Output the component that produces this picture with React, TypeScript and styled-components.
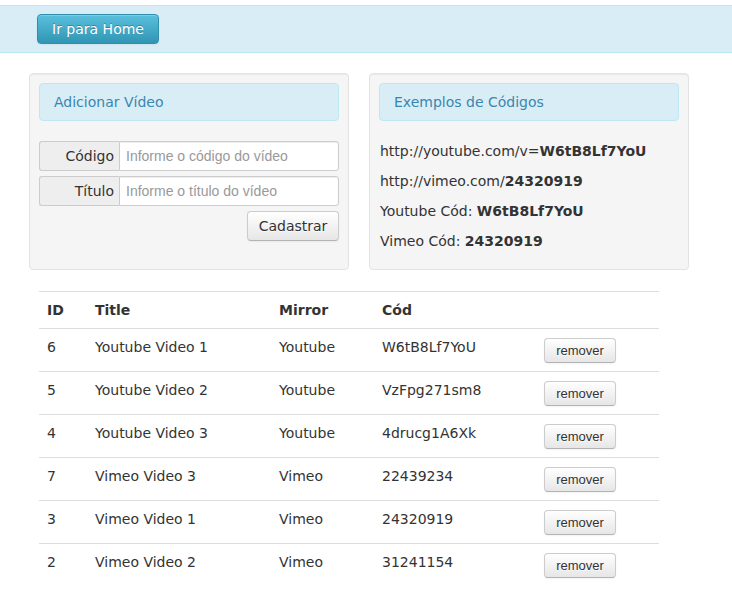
import React from 'react';
import styled, { createGlobalStyle } from 'styled-components';

// --- Types ---
type Video = {
  id: number;
  title: string;
  mirror: string;
  code: string;
};

const VIDEOS: Video[] = [
  { id: 6, title: 'Youtube Video 1', mirror: 'Youtube', code: 'W6tB8Lf7YoU' },
  { id: 5, title: 'Youtube Video 2', mirror: 'Youtube', code: 'VzFpg271sm8' },
  { id: 4, title: 'Youtube Video 3', mirror: 'Youtube', code: '4drucg1A6Xk' },
  { id: 7, title: 'Vimeo Video 3', mirror: 'Vimeo', code: '22439234' },
  { id: 3, title: 'Vimeo Video 1', mirror: 'Vimeo', code: '24320919' },
  { id: 2, title: 'Vimeo Video 2', mirror: 'Vimeo', code: '31241154' },
];

const COL_WIDTHS = [48, 184, 103, 162, 123];

// --- Global ---
const GlobalStyle = createGlobalStyle`
  html, body {
    margin: 0;
    padding: 0;
    background: #fff;
  }
  body {
    font-family: "DejaVu Sans", Verdana, sans-serif;
    font-size: 14px;
    line-height: 20px;
    color: #333;
  }
  * { box-sizing: border-box; }
`;

// --- Styled Components ---
const Page = styled.div`
  width: 732px;
  padding-top: 5px;
`;

const TopBar = styled.div`
  height: 48px;
  background: #d9edf7;
  border-top: 1px solid #bce8f1;
  border-bottom: 1px solid #bce8f1;
  display: flex;
  align-items: center;
  padding-left: 37px;
`;

const HomeButton = styled.button`
  height: 30px;
  width: 122px;
  padding: 0;
  font-family: inherit;
  font-size: 14px;
  color: #fff;
  text-shadow: 0 -1px 0 rgba(0, 0, 0, 0.25);
  background: linear-gradient(to bottom, #5bc0de, #2f96b4);
  border: 1px solid #2f8fac;
  border-radius: 4px;
  box-shadow: inset 0 1px 0 rgba(255, 255, 255, 0.2), 0 1px 2px rgba(0, 0, 0, 0.05);
  cursor: pointer;
`;

const Content = styled.div`
  padding: 20px 0 0 29px;
`;

const WellRow = styled.div`
  display: flex;
  gap: 20px;
`;

const Well = styled.div`
  width: 320px;
  height: 197px;
  padding: 9px;
  background: #f5f5f5;
  border: 1px solid #e3e3e3;
  border-radius: 4px;
  box-shadow: inset 0 1px 1px rgba(0, 0, 0, 0.05);
`;

const WellHeader = styled.div`
  height: 38px;
  display: flex;
  align-items: center;
  padding-left: 14px;
  background: #d9edf7;
  border: 1px solid #bce8f1;
  border-radius: 4px;
  color: #3a87ad;
  font-size: 14px;
`;

const Form = styled.form`
  margin-top: 20px;
  display: flex;
  flex-direction: column;
  gap: 5px;
`;

const InputGroup = styled.div`
  display: flex;
  height: 30px;
`;

const AddOn = styled.label`
  width: 80px;
  flex-shrink: 0;
  display: flex;
  align-items: center;
  justify-content: flex-end;
  padding-right: 5px;
  background: #eee;
  border: 1px solid #ccc;
  border-right: none;
  border-radius: 3px 0 0 3px;
  color: #333;
  font-size: 14px;
`;

const Input = styled.input`
  flex: 1;
  min-width: 0;
  padding: 4px 6px;
  font-family: "Liberation Sans", Arial, sans-serif;
  font-size: 14px;
  color: #555;
  background: #fff;
  border: 1px solid #ccc;
  border-radius: 0 3px 3px 0;
  box-shadow: inset 0 1px 1px rgba(0, 0, 0, 0.075);
  outline: none;

  &::placeholder {
    color: #999;
  }
`;

const FormActions = styled.div`
  display: flex;
  justify-content: flex-end;
`;

const DefaultButton = styled.button<{ $small?: boolean }>`
  height: ${p => (p.$small ? '25px' : '30px')};
  width: ${p => (p.$small ? '72px' : '92px')};
  padding: 0;
  font-family: ${p => (p.$small ? '"Liberation Sans", Arial, sans-serif' : 'inherit')};
  font-size: ${p => (p.$small ? '13px' : '14px')};
  color: #333;
  text-shadow: 0 1px 1px rgba(255, 255, 255, 0.75);
  background: linear-gradient(to bottom, #ffffff, #e6e6e6);
  border: 1px solid #ccc;
  border-bottom-color: #b3b3b3;
  border-radius: 4px;
  box-shadow: inset 0 1px 0 rgba(255, 255, 255, 0.2), 0 1px 2px rgba(0, 0, 0, 0.05);
  cursor: pointer;
`;

const ExampleList = styled.div`
  margin-top: 15px;
  padding-left: 1px;
`;

const ExampleLine = styled.div`
  height: 30px;
  line-height: 30px;
  font-size: 14px;
  color: #333;
  white-space: nowrap;

  b {
    font-weight: 700;
  }
`;

const Table = styled.table`
  margin: 21px 0 0 10px;
  width: 620px;
  border-collapse: collapse;
  table-layout: fixed;
`;

const Th = styled.th`
  height: 36px;
  text-align: left;
  padding: 8px;
  font-weight: 700;
  line-height: 20px;
  border-top: 1px solid #ddd;
  vertical-align: top;
`;

const Td = styled.td`
  padding: 8px;
  line-height: 20px;
  border-top: 1px solid #ddd;
  vertical-align: top;
  white-space: nowrap;
`;

const ActionCell = styled(Td)`
  padding-top: 9px;
  padding-bottom: 8px;
  line-height: 0;
`;

// --- Component ---
export default function App() {
  return (
    <>
      <GlobalStyle />
      <Page>
        <TopBar>
          <HomeButton>Ir para Home</HomeButton>
        </TopBar>

        <Content>
          <WellRow>
            <Well>
              <WellHeader>Adicionar Vídeo</WellHeader>
              <Form onSubmit={e => e.preventDefault()}>
                <InputGroup>
                  <AddOn>Código</AddOn>
                  <Input placeholder="Informe o código do vídeo" />
                </InputGroup>
                <InputGroup>
                  <AddOn>Título</AddOn>
                  <Input placeholder="Informe o título do vídeo" />
                </InputGroup>
                <FormActions>
                  <DefaultButton type="submit">Cadastrar</DefaultButton>
                </FormActions>
              </Form>
            </Well>

            <Well>
              <WellHeader>Exemplos de Códigos</WellHeader>
              <ExampleList>
                <ExampleLine>http://youtube.com/v=<b>W6tB8Lf7YoU</b></ExampleLine>
                <ExampleLine>http://vimeo.com/<b>24320919</b></ExampleLine>
                <ExampleLine>Youtube Cód: <b>W6tB8Lf7YoU</b></ExampleLine>
                <ExampleLine>Vimeo Cód: <b>24320919</b></ExampleLine>
              </ExampleList>
            </Well>
          </WellRow>

          <Table>
            <colgroup>
              {COL_WIDTHS.map((w, i) => (
                <col key={i} style={{ width: w }} />
              ))}
            </colgroup>
            <thead>
              <tr>
                <Th>ID</Th>
                <Th>Title</Th>
                <Th>Mirror</Th>
                <Th>Cód</Th>
                <Th />
              </tr>
            </thead>
            <tbody>
              {VIDEOS.map(v => (
                <tr key={v.id}>
                  <Td>{v.id}</Td>
                  <Td>{v.title}</Td>
                  <Td>{v.mirror}</Td>
                  <Td>{v.code}</Td>
                  <ActionCell>
                    <DefaultButton $small>remover</DefaultButton>
                  </ActionCell>
                </tr>
              ))}
            </tbody>
          </Table>
        </Content>
      </Page>
    </>
  );
}
